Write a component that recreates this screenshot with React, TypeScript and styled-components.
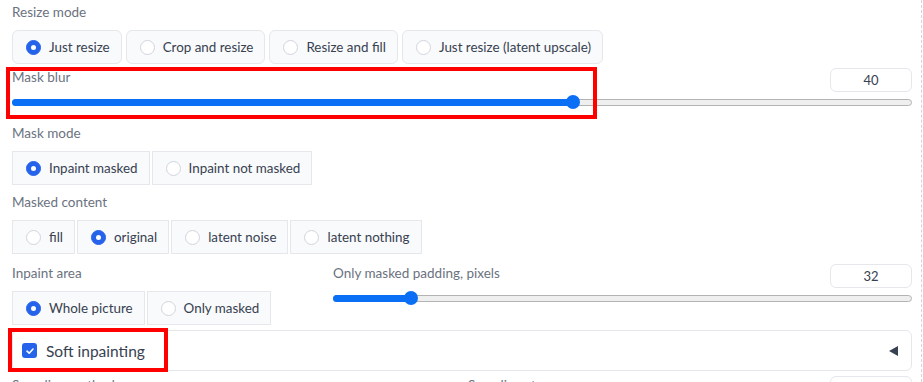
import React from 'react';
import styled, { createGlobalStyle } from 'styled-components';

const GlobalStyle = createGlobalStyle`
  body {
    margin: 0;
    background: #ffffff;
    font-family: Lato, "Noto Sans", sans-serif;
  }
`;

const Page = styled.div`
  width: 922px;
  height: 382px;
  box-sizing: border-box;
  padding: 2px 9px 0 12px;
  border-right: 1px dashed #d6d6d6;
  overflow: hidden;
`;

const Block = styled.div<{ $top?: number }>`
  position: relative;
  display: flex;
  flex-direction: column;
  margin-top: ${(p) => p.$top ?? 0}px;
`;

const Label = styled.span`
  font-size: 13.5px;
  line-height: 20px;
  color: #6b7280;
`;

const Group = styled.div<{ $rounded?: boolean }>`
  display: flex;
  gap: ${(p) => (p.$rounded ? 4 : 2)}px;
  margin-top: 8px;
`;

const Option = styled.label<{ $rounded?: boolean }>`
  display: flex;
  align-items: center;
  gap: 8px;
  height: 34px;
  box-sizing: border-box;
  padding: 0 11px 0 13px;
  border: 1px solid #e5e7eb;
  border-radius: ${(p) => (p.$rounded ? 6 : 0)}px;
  background: #f9fafb;
  font-size: 13.4px;
  color: #374151;
`;

const Dot = styled.span<{ $on: boolean }>`
  width: 15px;
  height: 15px;
  box-sizing: border-box;
  border-radius: 50%;
  flex: none;
  background: ${(p) => (p.$on ? '#2563eb' : '#ffffff')};
  border: 1px solid ${(p) => (p.$on ? '#2563eb' : '#d1d5db')};
  display: flex;
  align-items: center;
  justify-content: center;

  &::after {
    content: '';
    width: 5px;
    height: 5px;
    border-radius: 50%;
    background: #ffffff;
    display: ${(p) => (p.$on ? 'block' : 'none')};
  }
`;

const SliderHead = styled.div`
  display: flex;
  justify-content: space-between;
  align-items: flex-start;
`;

const NumberBox = styled.div`
  width: 82px;
  height: 24px;
  margin-top: 1px;
  box-sizing: border-box;
  border: 1px solid #e5e7eb;
  border-radius: 6px;
  background: #ffffff;
  font-size: 13px;
  color: #374151;
  display: flex;
  align-items: center;
  justify-content: center;
`;

const TrackArea = styled.div`
  height: 20px;
  display: flex;
  align-items: center;
`;

const Track = styled.div`
  position: relative;
  flex: 1;
  height: 7px;
  box-sizing: border-box;
  border: 1px solid #b3b3b3;
  border-radius: 4px;
  background: #efefef;
`;

const Fill = styled.div`
  position: absolute;
  left: -1px;
  top: -1px;
  bottom: -1px;
  border-radius: 4px;
  background: #0b6ff5;
`;

const Thumb = styled.div`
  position: absolute;
  top: 50%;
  width: 14px;
  height: 14px;
  margin: -7px 0 0 -7px;
  border-radius: 50%;
  background: #0b6ff5;
`;

const Callout = styled.div`
  position: absolute;
  border: 4px solid #ff0000;
  box-sizing: border-box;
  pointer-events: none;
`;

const Split = styled.div<{ $left: number; $top: number }>`
  display: grid;
  grid-template-columns: ${(p) => p.$left}px 1fr;
  column-gap: 12px;
  margin-top: ${(p) => p.$top}px;
`;

const Panel = styled.div`
  position: relative;
  height: 41px;
  box-sizing: border-box;
  margin-top: 5px;
  padding: 0 12px 0 9px;
  border: 1px solid #e5e7eb;
  border-radius: 6px;
  display: flex;
  align-items: center;
  gap: 9px;
`;

const Check = styled.span`
  width: 15px;
  height: 15px;
  border-radius: 3px;
  background: #2563eb;
  display: flex;
  align-items: center;
  justify-content: center;
  flex: none;
`;

const PanelTitle = styled.span`
  flex: 1;
  font-size: 15.5px;
  color: #374151;
`;

const Arrow = styled.span`
  width: 0;
  height: 0;
  border-top: 5.5px solid transparent;
  border-bottom: 5.5px solid transparent;
  border-right: 9px solid #374151;
  margin-right: 1px;
`;

type Choice = { text: string; on?: boolean };

function RadioGroup({ items, rounded }: { items: Choice[]; rounded?: boolean }) {
  return (
    <Group $rounded={rounded}>
      {items.map((it) => (
        <Option key={it.text} $rounded={rounded}>
          <Dot $on={!!it.on} />
          {it.text}
        </Option>
      ))}
    </Group>
  );
}

function Slider({ value, max }: { value: number; max: number }) {
  const frac = value / max;
  const pos = `calc(7px + (100% - 14px) * ${frac})`;
  return (
    <TrackArea>
      <Track>
        <Fill style={{ width: pos }} />
        <Thumb style={{ left: pos }} />
      </Track>
    </TrackArea>
  );
}

export default function App(): JSX.Element {
  return (
    <>
      <GlobalStyle />
      <Page>
        <Block>
          <Label>Resize mode</Label>
          <RadioGroup
            rounded
            items={[
              { text: 'Just resize', on: true },
              { text: 'Crop and resize' },
              { text: 'Resize and fill' },
              { text: 'Just resize (latent upscale)' },
            ]}
          />
        </Block>

        <Block $top={3}>
          <SliderHead>
            <Label>Mask blur</Label>
            <NumberBox>40</NumberBox>
          </SliderHead>
          <Slider value={40} max={64} />
          <Callout style={{ left: -6, top: 0, width: 591, height: 52 }} />
        </Block>

        <Block $top={11}>
          <Label>Mask mode</Label>
          <RadioGroup
            items={[{ text: 'Inpaint masked', on: true }, { text: 'Inpaint not masked' }]}
          />
        </Block>

        <Block $top={7}>
          <Label>Masked content</Label>
          <RadioGroup
            items={[
              { text: 'fill' },
              { text: 'original', on: true },
              { text: 'latent noise' },
              { text: 'latent nothing' },
            ]}
          />
        </Block>

        <Split $left={309} $top={9}>
          <Block>
            <Label>Inpaint area</Label>
            <RadioGroup items={[{ text: 'Whole picture', on: true }, { text: 'Only masked' }]} />
          </Block>
          <Block>
            <SliderHead>
              <Label>Only masked padding, pixels</Label>
              <NumberBox>32</NumberBox>
            </SliderHead>
            <Slider value={32} max={256} />
          </Block>
        </Split>

        <Panel>
          <Check>
            <svg width="10" height="10" viewBox="0 0 10 10">
              <path d="M2 5.2 L4.2 7.2 L8 3" fill="none" stroke="#fff" strokeWidth="1.6" strokeLinecap="round" strokeLinejoin="round" />
            </svg>
          </Check>
          <PanelTitle>Soft inpainting</PanelTitle>
          <Arrow />
          <Callout style={{ left: -5, top: -3, width: 160, height: 44 }} />
        </Panel>

        <Split $left={444} $top={4}>
          <Label>Sampling method</Label>
          <SliderHead>
            <Label>Sampling steps</Label>
            <NumberBox>20</NumberBox>
          </SliderHead>
        </Split>
      </Page>
    </>
  );
}
